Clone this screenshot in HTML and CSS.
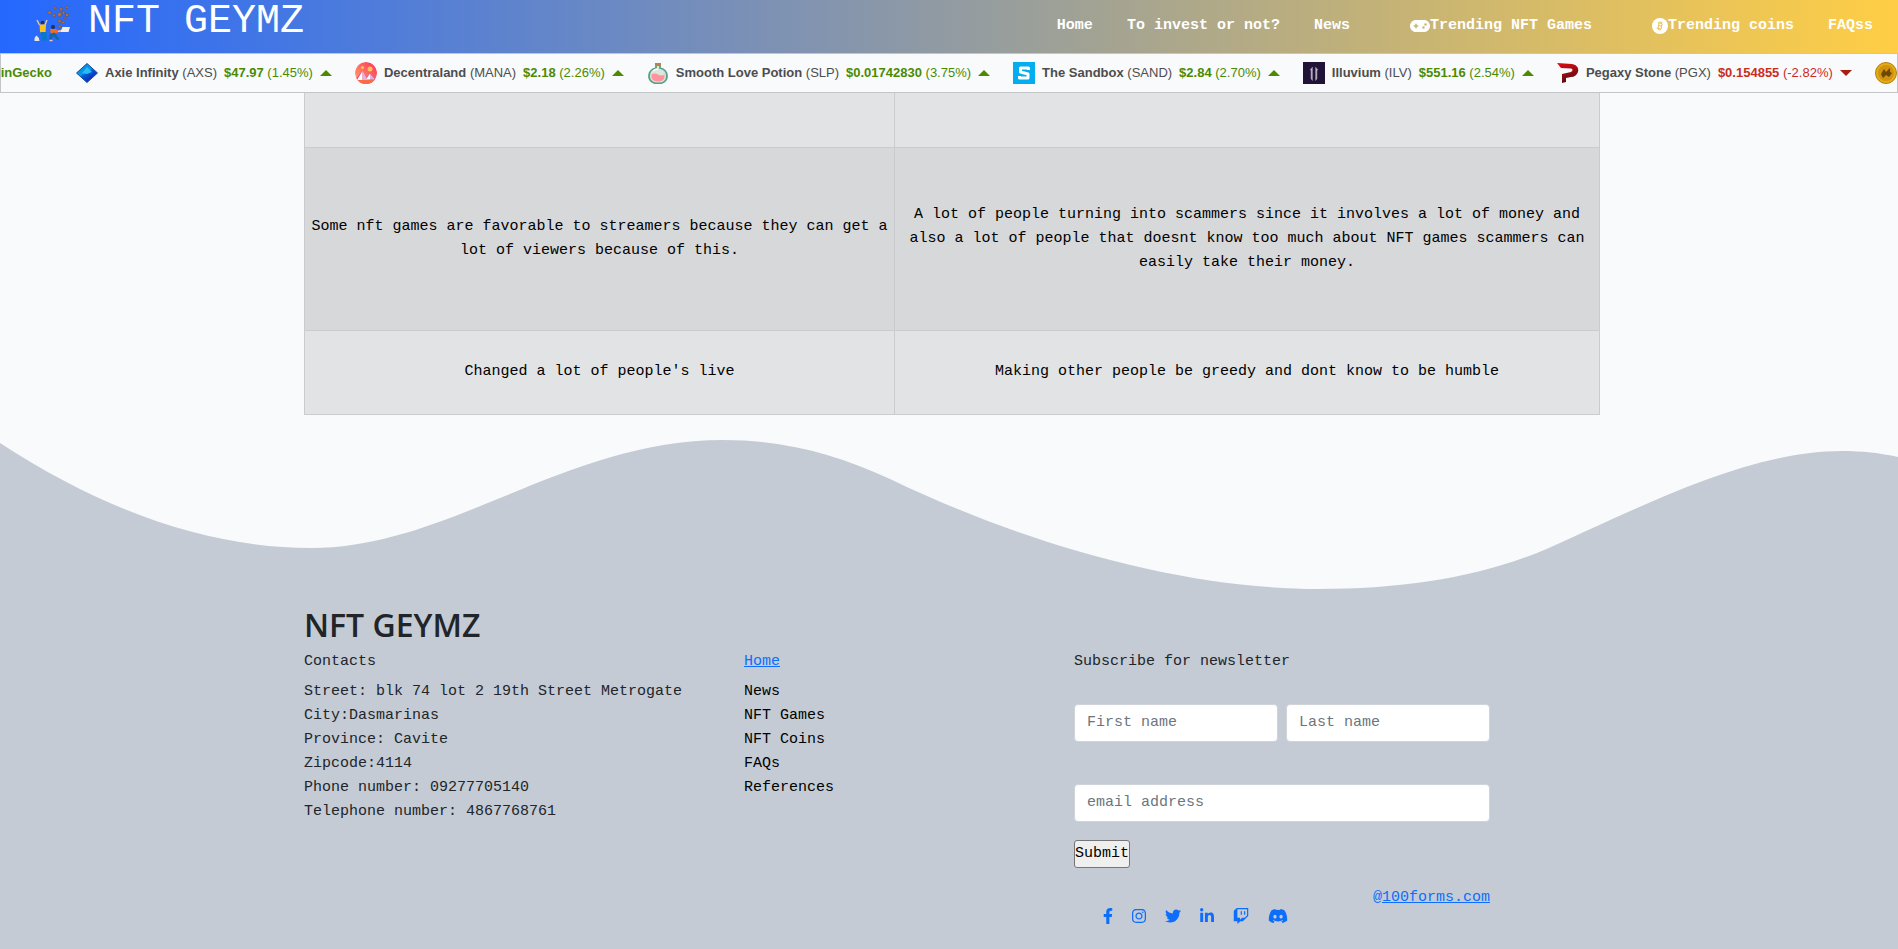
FILE: index.html
```html
<!DOCTYPE html>
<html lang="en">
<head>
<meta charset="utf-8">
<title>NFT GEYMZ</title>
<link rel="stylesheet" href="styles.css">
</head>
<body>
<header class="navbar">
  <a class="brand" href="#">
    <svg class="brand-logo" viewBox="0 0 36 36" aria-hidden="true">
      <g fill="#b9753a" stroke="#6b4a4a" stroke-width="0.6">
        <circle cx="21" cy="2" r="1.3"/><circle cx="27" cy="3" r="1.5"/><circle cx="33" cy="1.5" r="1.2"/>
        <circle cx="15.500" cy="6.500" r="1.6"/><circle cx="20" cy="9.500" r="1.4"/><circle cx="25.500" cy="8.500" r="2"/>
        <circle cx="29.500" cy="7" r="1.3"/><circle cx="33" cy="9" r="1.6"/><circle cx="31" cy="12" r="1.1"/>
        <circle cx="25.500" cy="15" r="1.5"/><circle cx="29" cy="16.500" r="1.3"/><circle cx="26" cy="20.500" r="1.3"/>
      </g>
      <path d="M3 14l2.500 5M13 14l-2 5" stroke="#f3c9a5" stroke-width="1.300" fill="none"/>
      <circle cx="8.500" cy="16.500" r="1.800" fill="#25304f"/>
      <path d="M5.500 18.500h6.500l-.5 8h-5.500z" fill="#ffc21c"/>
      <path d="M6.500 26h6l.5 8.500h-5z" fill="#0879c9"/>
      <circle cx="19" cy="21" r="2" fill="#25304f"/>
      <path d="M16 23h6l3 2-2 2-6 1z" fill="#f36a24"/>
      <path d="M15.500 28l5-1.500 5 6.500-2 1.500-4-4.500-2.500 4.500h-2z" fill="#1267aa"/>
      <path d="M24 25.500l4-1M15.500 34.500h3" stroke="#f3c9a5" stroke-width="1.300"/>
      <path d="M28.500 21h7.500l-1.500 5h-8z" fill="#f4eee8"/>
      <path d="M2.500 29.500q2.500 1.500 3 5.500h-5q-.5-4 2-5.500z" fill="#e5e6ec"/>
    </svg>
    <span>NFT GEYMZ</span>
  </a>
  <nav class="nav-links">
    <a href="#">Home</a>
    <a href="#">To invest or not?</a>
    <a href="#">News</a>
    <a class="with-icon" href="#"><svg class="icon-pad" viewBox="0 0 640 512" aria-hidden="true"><path fill="currentColor" fill-rule="evenodd" d="M192 64C86 64 0 150 0 256S86 448 192 448H448c106 0 192-86 192-192s-86-192-192-192H192zM496 168a40 40 0 1 1 0 80 40 40 0 1 1 0-80zM392 304a40 40 0 1 1 80 0 40 40 0 1 1 -80 0zM168 200c0-13.300 10.700-24 24-24s24 10.700 24 24v32h32c13.300 0 24 10.700 24 24s-10.700 24-24 24H216v32c0 13.300-10.700 24-24 24s-24-10.700-24-24V280H136c-13.300 0-24-10.700-24-24s10.700-24 24-24h32V200z"/></svg>Trending NFT Games</a>
    <a class="with-icon" href="#"><svg class="icon-coin" viewBox="0 0 16 16" aria-hidden="true"><circle cx="8" cy="8" r="8" fill="currentColor"/><g transform="rotate(14 8 8)" fill="none" stroke="#e9c356"><path d="M5.300 5h3a1.400 1.400 0 0 1 0 2.800H6.500M8.500 7.800a1.500 1.500 0 0 1 0 3H5.300M6.500 5v6M7.200 3.500V5M8.900 3.500V5M7.200 11v1.500M8.900 11v1.500"/></g></svg>Trending coins</a>
    <a href="#">FAQss</a>
  </nav>
</header>

<section class="ticker" aria-label="Coin prices">
  <a class="ticker-source" href="#">CoinGecko</a>
  <ul class="ticker-list">
    <li class="coin">
      <svg class="coin-icon" viewBox="0 0 22 22" aria-hidden="true"><defs><linearGradient id="axs" x1="0" y1="0" x2="0.700" y2="1"><stop offset="0" stop-color="#0784df"/><stop offset="0.500" stop-color="#0797ec"/><stop offset="0.600" stop-color="#0757d6"/><stop offset="1" stop-color="#0722ac"/></linearGradient></defs><path d="M11 1.500l10.500 9.500L11 20.500 .5 11z" fill="url(#axs)" stroke="#164c9d" stroke-linejoin="round"/><path d="M11 5l5 5-5 2-5-1z" fill="#25bdf2"/></svg>
      <span class="coin-name"><b>Axie Infinity</b> (AXS)</span><span class="price up"><b>$47.97</b> (1.45%)</span><span class="arrow arrow-up"></span>
    </li>
    <li class="coin">
      <svg class="coin-icon" viewBox="0 0 22 22" aria-hidden="true"><defs><linearGradient id="mana" x1="1" y1="0" x2="0" y2="1"><stop offset="0" stop-color="#ff2d55"/><stop offset="1" stop-color="#ffae72"/></linearGradient><clipPath id="manaclip"><circle cx="11" cy="11" r="11"/></clipPath></defs><g clip-path="url(#manaclip)"><circle cx="11" cy="11" r="11" fill="url(#mana)"/><path d="M0 18l7-9 5 6 3-4 7 7v4H0z" fill="#f34877"/><path d="M2 18l5.500-9v9zM11 17.500l4-6v6z" fill="#fff"/><path d="M7.500 9l5.500 9H7.500zM15 11.500l5 6h-5z" fill="#dcb4dd"/><path d="M2 18h18l-4 4H6z" fill="#fc6b48"/><circle cx="15" cy="7" r="2.500" fill="#ffc15f"/><circle cx="7.500" cy="5.500" r="1.500" fill="#ffc15f"/></g></svg>
      <span class="coin-name"><b>Decentraland</b> (MANA)</span><span class="price up"><b>$2.18</b> (2.26%)</span><span class="arrow arrow-up"></span>
    </li>
    <li class="coin">
      <svg class="coin-icon" viewBox="0 0 22 22" aria-hidden="true"><path d="M9 2h4v4c4 1 7 4 7 8 0 5-4 7.500-9 7.500S2 19 2 14c0-4 3-7 7-8z" fill="#d8e6dc" stroke="#5c9f88" stroke-width="1.800"/><path d="M4.500 12.500q3-2 6.500 0t6.500 0v3q-1 4-6.500 4t-6.500-4z" fill="#ff929c"/><path d="M8 1h6v3H8z" fill="#bc8146"/><path d="M6 9q2-2 5-2" stroke="#fff" stroke-width="1.500" fill="none"/></svg>
      <span class="coin-name"><b>Smooth Love Potion</b> (SLP)</span><span class="price up"><b>$0.01742830</b> (3.75%)</span><span class="arrow arrow-up"></span>
    </li>
    <li class="coin">
      <svg class="coin-icon" viewBox="0 0 22 22" aria-hidden="true"><path d="M0 0h22v22H0z" fill="#03adef"/><path d="M15.500 8V6h-8v4l7.500 2v4H6.500v-2" fill="none" stroke="#fff" stroke-width="3" stroke-linejoin="round"/></svg>
      <span class="coin-name"><b>The Sandbox</b> (SAND)</span><span class="price up"><b>$2.84</b> (2.70%)</span><span class="arrow arrow-up"></span>
    </li>
    <li class="coin">
      <svg class="coin-icon" viewBox="0 0 22 22" aria-hidden="true"><path d="M0 0h22v22H0z" fill="#211337"/><path d="M7 8l2.500-3v13.500L8 17V8zM15 8l-2.500-3v13.500L14 17V8z" fill="#c7bfce" stroke="#8a7c98" stroke-width="0.600"/></svg>
      <span class="coin-name"><b>Illuvium</b> (ILV)</span><span class="price up"><b>$551.16</b> (2.54%)</span><span class="arrow arrow-up"></span>
    </li>
    <li class="coin">
      <svg class="coin-icon" viewBox="0 0 22 22" aria-hidden="true"><defs><linearGradient id="pgx" x1="0" y1="0" x2="0.300" y2="1"><stop offset="0" stop-color="#e20d17"/><stop offset="1" stop-color="#5f0b0f"/></linearGradient></defs><path d="M0 1l15 1c5 1 7 4 6 8-1 3-4 5-7 5l-5 1v4l-4 1v-9l9-2c2-1 2-3 0-3.500L4 6z" fill="url(#pgx)"/></svg>
      <span class="coin-name"><b>Pegaxy Stone</b> (PGX)</span><span class="price down"><b>$0.154855</b> (-2.82%)</span><span class="arrow arrow-down"></span>
    </li>
    <li class="coin">
      <svg class="coin-icon" viewBox="0 0 22 22" aria-hidden="true"><circle cx="11" cy="11" r="10.500" fill="#e4ad17" stroke="#b57b0c"/><circle cx="11" cy="11" r="8" fill="#cf930f"/><path d="M6 12l3-5 2 3 4-4v4l2 1-3 4-3-2-3 3z" fill="#6d4706"/></svg>
    </li>
  </ul>
</section>

<main class="content">
  <table class="compare">
    <colgroup><col class="col-pro"><col class="col-con"></colgroup>
    <tbody>
      <tr class="row-rest"><td></td><td></td></tr>
      <tr class="row-tall"><td>Some nft games are favorable to streamers because they can get a lot of viewers because of this.</td><td>A lot of people turning into scammers since it involves a lot of money and also a lot of people that doesnt know too much about NFT games scammers can easily take their money.</td></tr>
      <tr class="row-short"><td>Changed a lot of people's live</td><td>Making other people be greedy and dont know to be humble</td></tr>
    </tbody>
  </table>
</main>

<svg class="wave" viewBox="0 0 1898 150" preserveAspectRatio="none" aria-hidden="true"><path fill="#c4cbd5" d="M0 3C110 75 215 108 311 108C450 108 565 0 723 0C785 0 838 15 890 39C1030 106 1185 149 1319 149C1400 149 1470 139 1537 113C1620 78 1740 11 1842 11C1862 11 1880 13 1898 17V150H0z"/></svg>

<footer class="footer">
  <div class="footer-inner">
    <h2 class="footer-title">NFT GEYMZ</h2>
    <div class="footer-grid">
      <section>
        <p class="lead">Contacts</p>
        <p class="lines">Street: blk 74 lot 2 19th Street Metrogate<br>City:Dasmarinas<br>Province: Cavite<br>Zipcode:4114<br>Phone number: 09277705140<br>Telephone number: 4867768761</p>
      </section>
      <nav>
        <p class="lead"><a href="#">Home</a></p>
        <ul class="links">
          <li><a href="#">News</a></li>
          <li><a href="#">NFT Games</a></li>
          <li><a href="#">NFT Coins</a></li>
          <li><a href="#">FAQs</a></li>
          <li><a href="#">References</a></li>
        </ul>
      </nav>
      <section class="newsletter">
        <p class="lead">Subscribe for newsletter</p>
        <form class="form">
          <div class="names">
            <input type="text" placeholder="First name" aria-label="First name">
            <input type="text" placeholder="Last name" aria-label="Last name">
          </div>
          <input class="email" type="email" placeholder="email address" aria-label="email address">
          <button class="submit" type="button">Submit</button>
        </form>
        <div class="bottom">
          <div class="social">
            <a href="#" aria-label="Facebook"><svg class="w10" viewBox="0 0 320 512"><path d="M279.140 288l14.220-92.660h-88.910v-60.130c0-25.350 12.420-50.060 52.240-50.060h40.420V6.260S260.430 0 225.360 0c-73.220 0-121.080 44.380-121.080 124.720v70.620H22.890V288h81.390v224h100.170V288z"/></svg></a>
            <a href="#" aria-label="Instagram"><svg class="w14" viewBox="0 0 448 512"><path d="M224.100 141c-63.600 0-114.900 51.300-114.900 114.900s51.300 114.900 114.900 114.900S339 319.500 339 255.900 287.700 141 224.100 141zm0 189.600c-41.100 0-74.700-33.500-74.700-74.700s33.500-74.700 74.700-74.700 74.700 33.500 74.700 74.700-33.600 74.700-74.700 74.700zm146.400-194.300c0 14.900-12 26.800-26.800 26.800-14.900 0-26.800-12-26.800-26.800s12-26.800 26.800-26.800 26.800 12 26.800 26.800zm76.100 27.200c-1.700-35.900-9.900-67.700-36.200-93.900-26.200-26.200-58-34.400-93.900-36.200-37-2.100-147.900-2.100-184.900 0-35.800 1.700-67.600 9.900-93.900 36.100s-34.400 58-36.200 93.900c-2.100 37-2.100 147.900 0 184.900 1.700 35.900 9.900 67.700 36.200 93.900s58 34.400 93.900 36.200c37 2.100 147.900 2.100 184.900 0 35.900-1.700 67.700-9.900 93.900-36.200 26.200-26.200 34.400-58 36.200-93.900 2.100-37 2.100-147.800 0-184.800zM398.800 388c-7.800 19.600-22.900 34.700-42.600 42.600-29.500 11.700-99.500 9-132.100 9s-102.700 2.600-132.100-9c-19.600-7.800-34.700-22.900-42.600-42.600-11.700-29.500-9-99.500-9-132.100s-2.600-102.700 9-132.100c7.800-19.600 22.900-34.700 42.600-42.600 29.500-11.700 99.500-9 132.100-9s102.700-2.600 132.100 9c19.600 7.800 34.700 22.900 42.600 42.600 11.700 29.500 9 99.500 9 132.100s2.700 102.700-9 132.100z"/></svg></a>
            <a href="#" aria-label="Twitter"><svg class="w16" viewBox="0 0 512 512"><path d="M459.370 151.716c.325 4.548.325 9.097.325 13.645 0 138.720-105.583 298.558-298.558 298.558-59.452 0-114.680-17.219-161.137-47.106 8.447.974 16.568 1.299 25.340 1.299 49.055 0 94.213-16.568 130.274-44.832-46.132-.975-84.792-31.188-98.112-72.772 6.498.974 12.995 1.624 19.818 1.624 9.421 0 18.843-1.300 27.614-3.573-48.081-9.747-84.143-51.980-84.143-102.985v-1.299c13.969 7.797 30.214 12.670 47.431 13.319-28.264-18.843-46.781-51.005-46.781-87.391 0-19.492 5.197-37.360 14.294-52.954 51.655 63.675 129.300 105.258 216.365 109.807-1.624-7.797-2.599-15.918-2.599-24.040 0-57.828 46.782-104.934 104.934-104.934 30.213 0 57.502 12.670 76.670 33.137 23.715-4.548 46.456-13.320 66.599-25.340-7.798 24.366-24.366 44.833-46.132 57.827 21.117-2.273 41.584-8.122 60.426-16.243-14.292 20.791-32.161 39.308-52.628 54.253z"/></svg></a>
            <a href="#" aria-label="LinkedIn"><svg class="w14" viewBox="0 0 448 512"><path d="M100.280 448H7.400V148.900h92.880zM53.790 108.100C24.090 108.100 0 83.500 0 53.800a53.790 53.790 0 0 1 107.580 0c0 29.700-24.100 54.300-53.790 54.300zM447.900 448h-92.680V302.400c0-34.700-.7-79.200-48.290-79.200-48.290 0-55.690 37.700-55.690 76.700V448h-92.780V148.900h89.080v40.800h1.300c12.400-23.500 42.690-48.300 87.880-48.300 94 0 111.280 61.900 111.280 142.300V448z"/></svg></a>
            <a href="#" aria-label="Twitch"><svg class="w16" viewBox="0 0 512 512"><path d="M391.170 103.470H352.540v109.700h38.630ZM285 103H246.370V212.750H285ZM120.830 0 24.310 91.420V420.580H140.140V512l96.530-91.420h77.250L487.690 256V0ZM449.070 237.750l-77.220 73.120H294.610l-67.600 64v-64H140.140V36.580H449.070Z"/></svg></a>
            <a href="#" aria-label="Discord"><svg class="w20" viewBox="0 0 640 512"><path d="M524.531 69.836a1.500 1.500 0 0 0-.764-.7A485.065 485.065 0 0 0 404.081 32.030a1.816 1.816 0 0 0-1.923.91 337.461 337.461 0 0 0-14.900 30.600 447.848 447.848 0 0 0-134.426 0 309.541 309.541 0 0 0-15.135-30.600 1.890 1.890 0 0 0-1.924-.91A483.689 483.689 0 0 0 116.085 69.137a1.712 1.712 0 0 0-.788.676C39.068 183.651 18.186 294.690 28.430 404.354a2.016 2.016 0 0 0 .765 1.375A487.666 487.666 0 0 0 176.020 479.918a1.900 1.900 0 0 0 2.063-.676A348.200 348.200 0 0 0 208.120 430.400a1.860 1.860 0 0 0-1.019-2.588 321.173 321.173 0 0 1-45.868-21.853 1.885 1.885 0 0 1-.185-3.126c3.082-2.309 6.166-4.711 9.109-7.137a1.819 1.819 0 0 1 1.900-.256c96.229 43.917 200.410 43.917 295.500 0a1.812 1.812 0 0 1 1.924.233c2.944 2.426 6.027 4.851 9.132 7.160a1.884 1.884 0 0 1-.162 3.126 301.407 301.407 0 0 1-45.890 21.830 1.875 1.875 0 0 0-1 2.611 391.055 391.055 0 0 0 30.014 48.815 1.864 1.864 0 0 0 2.063.7A486.048 486.048 0 0 0 610.700 405.729a1.882 1.882 0 0 0 .765-1.352C623.729 277.594 590.933 167.465 524.531 69.836ZM222.491 337.580c-28.972 0-52.844-26.587-52.844-59.239S193.056 219.100 222.491 219.100c29.665 0 53.306 26.820 52.843 59.239C275.334 310.993 251.924 337.580 222.491 337.580Zm195.380 0c-28.971 0-52.843-26.587-52.843-59.239S388.437 219.100 417.871 219.100c29.667 0 53.307 26.820 52.844 59.239C470.715 310.993 447.538 337.580 417.871 337.580Z"/></svg></a>
          </div>
          <a class="credit" href="#">@100forms.com</a>
        </div>
      </section>
    </div>
  </div>
</footer>
</body>
</html>
```

FILE: styles.css
```css
*, *::before, *::after { box-sizing: border-box; }

body {
  margin: 0;
  min-height: 100vh;
  display: flex;
  flex-direction: column;
  overflow-x: hidden;
  background: #f8fafc;
  color: #212529;
  font: 15px/24px "Liberation Mono", monospace;
}

a { color: #0d6efd; }
p, h2, ul { margin: 0; padding: 0; }
ul { list-style: none; }

/* Top bar */
.navbar {
  display: flex;
  justify-content: space-between;
  align-items: flex-start;
  height: 53px;
  padding: 0 25px 0 34px;
  background: linear-gradient(to right, #2468ff, #ffce45);
}
.brand {
  display: flex;
  gap: 18px;
  color: #fff;
  text-decoration: none;
  white-space: nowrap;
  font-size: 40px;
  line-height: 44px;
}
.brand-logo { width: 36px; height: 36px; margin-top: 6px; }
.nav-links {
  display: flex;
  gap: 34px;
  padding-top: 14px;
  white-space: nowrap;
  font-weight: 700;
}
.nav-links a { color: #fff; text-decoration: none; }
.nav-links .with-icon { display: flex; align-items: center; padding-left: 26px; }
.icon-pad { width: 20px; height: 16px; }
.icon-coin { width: 16px; height: 16px; }

/* Price ticker */
.ticker {
  display: flex;
  justify-content: flex-start;
  align-items: center;
  gap: 24px;
  height: 40px;
  border: 1px solid #c3c5c8;
  overflow: hidden;
  white-space: nowrap;
  color: #4d4d4d;
  font: 13px/20px "Liberation Sans", sans-serif;
}
.ticker-source {
  display: flex;
  justify-content: flex-end;
  flex: none;
  width: 51px;
  color: #4b8b00;
  font-weight: 700;
  text-decoration: none;
}
.ticker-list { display: flex; gap: 23px; }
.coin { display: flex; flex: none; align-items: center; gap: 7px; }
.coin b { font-weight: 700; }
.coin-icon { width: 22px; height: 22px; }
.up { color: #4b8b00; }
.down { color: #cc2b1d; }
.arrow { border: 6px solid transparent; }
.arrow-up { border-top: 0; border-bottom-color: #4b8b00; }
.arrow-down { border-bottom: 0; border-top-color: #a81d12; }

/* Comparison table */
.content { padding: 0 0 25px 6px; }
.compare {
  width: 1296px;
  max-width: 100%;
  margin: 0 auto;
  border-collapse: collapse;
  table-layout: fixed;
  text-align: center;
  color: #000;
}
.col-pro { width: 590px; }
.compare td { padding: 4px; border: 1px solid #c9cbce; }
.row-rest td { height: 54px; border-top: 0; }
.row-rest, .row-short { background: #e1e3e5; }
.row-tall { background: #d6d8da; }
.row-tall td { height: 183px; }
.row-short td { height: 84px; }

/* Footer */
.wave { display: block; flex: none; width: 100%; height: 150px; }
.footer { flex: 1; padding: 16px 0 16px 6px; background: #c4cbd5; }
.footer-inner { width: 1296px; max-width: 100%; margin: 0 auto; }
.footer-title {
  margin-bottom: 6px;
  font: 600 32px/38px "Open Sans", sans-serif;
}
.footer-grid { display: grid; grid-template-columns: 440px 330px 416px; }
.lead { margin-bottom: 6px; }
.links a { color: #000; text-decoration: none; }

.form { display: flex; flex-direction: column; align-items: flex-start; margin-top: 30px; }
.names { display: grid; grid-template-columns: 1fr 1fr; gap: 8px; width: 100%; }
.form input {
  width: 100%;
  height: 38px;
  padding: 6px 12px;
  border: 1px solid #ced4da;
  border-radius: 4px;
  background: #fff;
  font: inherit;
}
.form input::placeholder { color: #6c757d; opacity: 1; }
.form .email { margin-top: 42px; }
.submit {
  margin-top: 18px;
  padding: 1px 0;
  border: 1px solid #767676;
  border-radius: 3px;
  background: #efefef;
  color: #000;
  font: inherit;
}
.bottom { display: flex; justify-content: space-between; padding: 18px 0 0 29px; }
.social { display: flex; gap: 19px; padding-top: 22px; }
.social a { display: flex; }
.social svg { height: 16px; fill: #0d6efd; }
.w10 { width: 10px; }
.w14 { width: 14px; }
.w16 { width: 16px; }
.w20 { width: 20px; }
```
